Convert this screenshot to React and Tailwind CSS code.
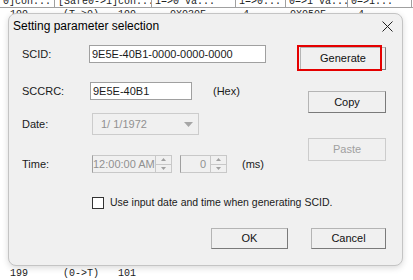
const mono = { fontFamily: '"Liberation Mono", monospace' };

function Backdrop() {
  const cols = [
    ["0]con...", 55],
    ["[Safe0->1]con...", 97],
    ["1=>0 va...", 84],
    ["1=>0...", 50],
    ["0=>1 va...", 62],
    ["0=>1...", 64],
    ["1", 40],
  ];
  return (
    <div className="flex h-full flex-col whitespace-nowrap text-[10px] leading-[12px] text-[#222]" style={mono}>
      <div className="-mt-[4px] flex h-[12px] border-b border-[#a0a0a0]">
        {cols.map(([t, w], i) => (
          <div key={i} className="shrink-0 overflow-hidden border-r border-[#a0a0a0] pl-[3px]" style={{ width: w }}>
            {t}
          </div>
        ))}
      </div>
      <div className="flex h-[12px] pt-[1px]">
        <span className="w-[63px] pl-[10px]">199</span>
        <span className="w-[55px]">(T-&gt;0)</span>
        <span className="w-[52px]">199</span>
        <span className="w-[73px]">0X030F</span>
        <span className="w-[47px]">4</span>
        <span className="w-[68px]">0X050F</span>
        <span>4</span>
      </div>
      <div className="mt-auto flex h-[12px]">
        <span className="w-[63px] pl-[10px]">199</span>
        <span className="w-[55px]">(0-&gt;T)</span>
        <span>101</span>
      </div>
    </div>
  );
}

function WinButton({ children, disabled, className = "" }) {
  return (
    <div
      className={
        "flex items-center justify-center border bg-[#f0f0f0] text-[11px] " +
        (disabled
          ? "border-[#cccccc] text-[#a0a0a0] "
          : "border-[#b4b4b4] border-b-[#7a7a7a] border-r-[#7a7a7a] text-[#111] ") +
        className
      }
    >
      {children}
    </div>
  );
}

function Spinner() {
  return (
    <div className="flex h-full w-[16px] shrink-0 flex-col border-l border-[#c8c8c8]">
      <div className="flex flex-1 items-center justify-center border-b border-[#c8c8c8]">
        <svg width="5" height="3" viewBox="0 0 5 3"><path d="M0 3L2.5 0L5 3Z" fill="#a0a0a0" /></svg>
      </div>
      <div className="flex flex-1 items-center justify-center">
        <svg width="5" height="3" viewBox="0 0 5 3"><path d="M0 0L2.5 3L5 0Z" fill="#a0a0a0" /></svg>
      </div>
    </div>
  );
}

function Dialog() {
  return (
    <div
      className="absolute left-[8px] top-[13px] flex h-[253px] w-[395px] flex-col whitespace-nowrap rounded-[8px] border border-[#c4c4c4] bg-[#f0f0f0] text-[11px] text-[#1a1a1a] shadow-[0_2px_6px_rgba(0,0,0,0.15)]"
      style={{ fontFamily: '"Liberation Sans", Arial, sans-serif' }}
    >
      <div className="flex h-[24px] items-center justify-between pl-[4px] pr-[9px]">
        <span className="text-[12px] text-black">Setting parameter selection</span>
        <svg width="11" height="11" viewBox="0 0 11 11">
          <path d="M0.5 0.5L10.5 10.5M10.5 0.5L0.5 10.5" stroke="#222" strokeWidth="1" />
        </svg>
      </div>

      <div className="flex pl-[13px]">
        <div className="flex w-[278px] shrink-0 flex-col">
          <div className="mt-[7px] flex h-[18px] items-center">
            <span className="w-[67px]">SCID:</span>
            <div className="flex h-full w-[177px] items-center border border-[#a0a0a0] bg-white pl-[2px]">
              9E5E-40B1-0000-0000-0000
            </div>
          </div>
          <div className="mt-[19px] flex h-[18px] items-center">
            <span className="w-[68px]">SCCRC:</span>
            <div className="flex h-full w-[102px] items-center border border-[#a0a0a0] bg-white pl-[2px]">
              9E5E-40B1
            </div>
            <span className="ml-[21px]">(Hex)</span>
          </div>
          <div className="mt-[13px] flex h-[22px] items-center">
            <span className="w-[70px]">Date:</span>
            <div className="flex h-full w-[107px] items-center justify-between border border-[#cccccc] bg-[#f0f0f0] pl-[8px] pr-[5px] text-[#909090]">
              <span>1/ 1/1972</span>
              <svg width="9" height="5" viewBox="0 0 9 5"><path d="M0 0L4.5 5L9 0Z" fill="#a6a6a6" /></svg>
            </div>
          </div>
          <div className="mt-[20px] flex h-[18px] items-center">
            <span className="w-[70px]">Time:</span>
            <div className="flex h-full w-[80px] items-center border border-[#c8c8c8] border-l-[#a0a0a0] bg-[#f0f0f0] text-[#909090]">
              <span className="flex-1 overflow-hidden">12:00:00 AM</span>
              <Spinner />
            </div>
            <div className="ml-[8px] flex h-full w-[47px] items-center border border-[#c8c8c8] border-l-[#a0a0a0] bg-[#f0f0f0] text-[#909090]">
              <span className="flex-1 pr-[4px] text-right">0</span>
              <Spinner />
            </div>
            <span className="ml-[15px]">(ms)</span>
          </div>
          <div className="mt-[24px] flex h-[12px] items-center">
            <div className="ml-[70px] h-[12px] w-[12px] shrink-0 border border-[#333] bg-white" />
            <span className="ml-[6px] text-[10.5px]">Use input date and time when generating SCID.</span>
          </div>
        </div>

        <div className="flex flex-col">
          <div className="relative mt-[9px]">
            <WinButton className="h-[23px] w-[86px]">Generate</WinButton>
            <div className="absolute -left-[3px] -top-[2px] h-[26px] w-[85px] border-2 border-[#e50000]" />
          </div>
          <WinButton className="ml-[8px] mt-[21px] h-[22px] w-[78px]">Copy</WinButton>
          <WinButton disabled className="ml-[8px] mt-[25px] h-[23px] w-[78px]">Paste</WinButton>
        </div>
      </div>

      <div className="mt-[19px] flex justify-end gap-[23px] pr-[16px]">
        <WinButton className="h-[21px] w-[77px]">OK</WinButton>
        <WinButton className="h-[21px] w-[75px]">Cancel</WinButton>
      </div>
    </div>
  );
}

export default function App() {
  return (
    <div className="relative h-[280px] w-[413px] overflow-hidden bg-white">
      <Backdrop />
      <Dialog />
    </div>
  );
}
